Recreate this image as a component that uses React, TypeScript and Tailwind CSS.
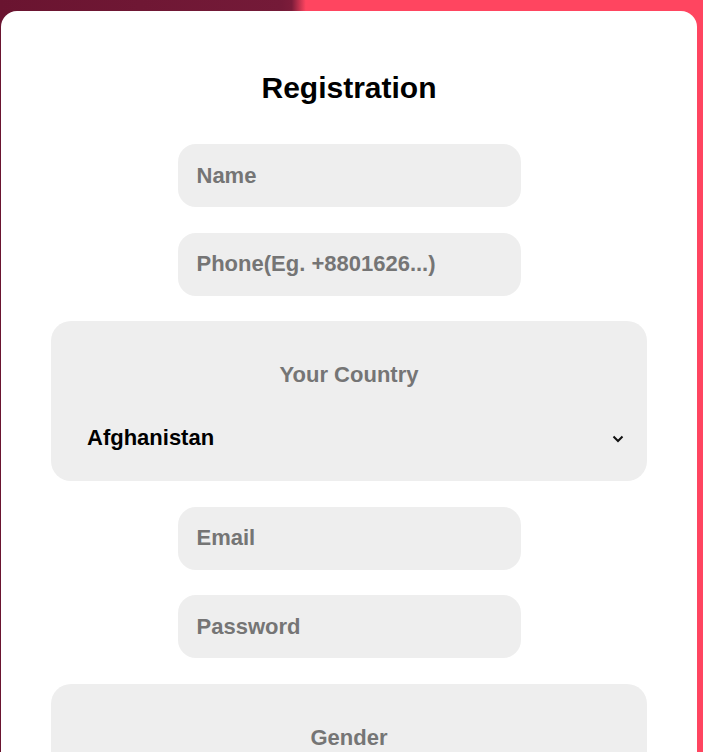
import React from 'react';

const font = { fontFamily: '"Liberation Sans", Arial, sans-serif' };

const Field: React.FC<{ placeholder: string; type?: string }> = ({ placeholder, type = 'text' }) => (
  <input
    type={type}
    placeholder={placeholder}
    className="w-[343px] h-[63px] rounded-[18px] bg-[#eeeeee] pl-[19px] pr-4 text-[22px] font-bold text-black placeholder:text-[#757575] outline-none"
  />
);

const SelectBox: React.FC<{ label: string; value?: string }> = ({ label, value }) => (
  <div className="w-[596px] rounded-[20px] bg-[#eeeeee] pt-[41px] pb-[30px]">
    <div className="text-center text-[22px] leading-[26px] font-bold text-[#757575]">{label}</div>
    {value && (
      <div className="mt-[37px] flex items-center justify-between pl-[36px] pr-[23px]">
        <span className="text-[22px] leading-[26px] font-bold text-black">{value}</span>
        <svg width="12" height="8" viewBox="0 0 12 8" className="mt-[2px]">
          <polyline points="1.5,1.5 6,6 10.5,1.5" fill="none" stroke="#111" strokeWidth="2" />
        </svg>
      </div>
    )}
  </div>
);

export default function App() {
  return (
    <div
      className="h-screen overflow-hidden bg-[linear-gradient(90deg,#6a1430_0%,#741a38_40%,#7c1c3a_41.5%,#ff4560_43.5%,#ff4560_100%)] pt-[11px]"
      style={font}
    >
      <div className="ml-[1px] w-[696px] rounded-[16px] bg-white pt-[60px] pb-10">
        <h1 className="text-center text-[30px] leading-[34px] font-bold text-black">Registration</h1>
        <form className="mt-[39px] flex flex-col items-center gap-[25.5px]">
          <Field placeholder="Name" />
          <Field placeholder="Phone(Eg. +8801626...)" />
          <SelectBox label="Your Country" value="Afghanistan" />
          <Field placeholder="Email" type="email" />
          <Field placeholder="Password" type="password" />
          <SelectBox label="Gender" />
        </form>
      </div>
    </div>
  );
}
